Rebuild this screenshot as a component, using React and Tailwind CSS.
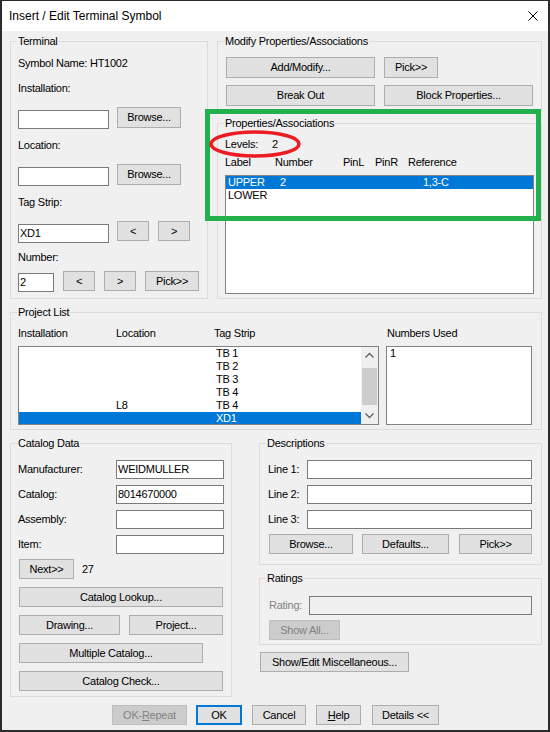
import React from 'react';

const FONT = "font-['Liberation_Sans',Arial,sans-serif]";

function Btn({ className = '', disabled = false, children }) {
  return (
    <div
      className={`flex shrink-0 items-center justify-center border leading-none ${
        disabled ? 'border-[#bfbfbf] bg-[#cccccc] text-[#838383]' : 'border-[#adadad] bg-[#e1e1e1] text-black'
      } ${className}`}
    >
      {children}
    </div>
  );
}

function Field({ className = '', children }) {
  return (
    <div className={`flex shrink-0 items-center border border-[#7a7a7a] px-[1px] leading-none ${className}`}>
      {children}
    </div>
  );
}

function Group({ label, className = '', children }) {
  return (
    <div className={`relative shrink-0 border border-[#dcdcdc] ${className}`}>
      <span className="absolute left-[6px] top-[-7px] h-[13px] bg-[#f0f0f0] px-[1px] leading-[13px]">{label}</span>
      {children}
    </div>
  );
}

function Text({ className = '', children }) {
  return <div className={`h-[13px] shrink-0 leading-[13px] ${className}`}>{children}</div>;
}

function Chevron({ up }) {
  return (
    <svg width="17" height="17" viewBox="0 0 17 17">
      <polyline
        points={up ? '4.5,10.5 8.5,6.5 12.5,10.5' : '4.5,6.5 8.5,10.5 12.5,6.5'}
        fill="none"
        stroke="#606060"
        strokeWidth="1.3"
      />
    </svg>
  );
}

const projectRows = [
  { loc: '', tag: 'TB 1' },
  { loc: '', tag: 'TB 2' },
  { loc: '', tag: 'TB 3' },
  { loc: '', tag: 'TB 4' },
  { loc: 'L8', tag: 'TB 4' },
  { loc: '', tag: 'XD1', selected: true },
];

export default function App() {
  return (
    <div
      className={`relative flex h-[732px] w-[550px] flex-col border-b-2 border-l-2 border-r-2 border-t border-[#2b2b2b] bg-[#f0f0f0] text-[11px] tracking-[-0.25px] text-black ${FONT}`}
    >
      {/* title bar */}
      <div className="flex h-[30px] shrink-0 items-center justify-between bg-white pl-[7px] pr-[10px] text-[12px] tracking-normal">
        <span>Insert / Edit Terminal Symbol</span>
        <svg width="10" height="10" viewBox="0 0 10 10">
          <path d="M0.5 0.5 L9.5 9.5 M9.5 0.5 L0.5 9.5" stroke="#000" strokeWidth="1" />
        </svg>
      </div>

      <div className="flex flex-1 flex-col pl-[8px]">
        {/* top row */}
        <div className="mt-[10px] flex gap-[9px]">
          <Group label="Terminal" className="flex h-[258px] w-[198px] flex-col pl-[7px]">
            <Text className="mt-[15px]">Symbol Name: HT1002</Text>
            <Text className="mt-[12px]">Installation:</Text>
            <div className="mt-[12px] flex items-start">
              <Field className="mt-[3px] h-[19px] w-[91px] bg-white" />
              <Btn className="ml-[8px] h-[21px] w-[64px]">Browse...</Btn>
            </div>
            <Text className="mt-[10px]">Location:</Text>
            <div className="mt-[12px] flex items-start">
              <Field className="mt-[3px] h-[19px] w-[91px] bg-white" />
              <Btn className="ml-[8px] h-[21px] w-[64px]">Browse...</Btn>
            </div>
            <Text className="mt-[10px]">Tag Strip:</Text>
            <div className="mt-[12px] flex items-start">
              <Field className="mt-[3px] h-[19px] w-[91px] bg-white">XD1</Field>
              <Btn className="ml-[8px] h-[20px] w-[32px]">&lt;</Btn>
              <Btn className="ml-[9px] h-[20px] w-[32px]">&gt;</Btn>
            </div>
            <Text className="mt-[8px]">Number:</Text>
            <div className="mt-[7px] flex items-start">
              <Field className="mt-[2px] h-[19px] w-[36px] bg-white">2</Field>
              <Btn className="ml-[9px] h-[20px] w-[32px]">&lt;</Btn>
              <Btn className="ml-[9px] h-[20px] w-[32px]">&gt;</Btn>
              <Btn className="ml-[9px] h-[20px] w-[54px]">Pick&gt;&gt;</Btn>
            </div>
          </Group>

          <div className="flex w-[325px] flex-col">
            <Group label="Modify Properties/Associations" className="flex h-[72px] w-[325px] flex-col pl-[8px]">
              <div className="mt-[15px] flex">
                <Btn className="h-[21px] w-[149px]">Add/Modify...</Btn>
                <Btn className="ml-[9px] h-[21px] w-[54px]">Pick&gt;&gt;</Btn>
              </div>
              <div className="mt-[7px] flex">
                <Btn className="h-[21px] w-[149px]">Break Out</Btn>
                <Btn className="ml-[9px] h-[21px] w-[149px]">Block Properties...</Btn>
              </div>
            </Group>

            <Group label="Properties/Associations" className="mt-[10px] flex h-[176px] w-[325px] flex-col pl-[7px]">
              <Text className="mt-[14px] flex">
                <span className="w-[47px]">Levels:</span>
                <span>2</span>
              </Text>
              <Text className="mt-[5px] flex">
                <span className="w-[50px]">Label</span>
                <span className="w-[68px]">Number</span>
                <span className="w-[32px]">PinL</span>
                <span className="w-[33px]">PinR</span>
                <span>Reference</span>
              </Text>
              <div className="mt-[6px] h-[119px] w-[309px] overflow-hidden border border-[#828282] bg-white">
                <div className="flex h-[13px] bg-[#0078d7] pl-[2px] leading-[13px] text-white">
                  <span className="w-[52px]">UPPER</span>
                  <span className="w-[143px]">2</span>
                  <span>1,3-C</span>
                </div>
                <div className="flex h-[13px] pl-[2px] leading-[13px]">
                  <span>LOWER</span>
                </div>
              </div>
            </Group>
          </div>
        </div>

        {/* project list */}
        <Group label="Project List" className="mt-[13px] flex h-[118px] w-[532px] flex-col pl-[7px]">
          <Text className="mt-[14px] flex">
            <div className="flex w-[361px]">
              <span className="w-[98px]">Installation</span>
              <span className="w-[98px]">Location</span>
              <span>Tag Strip</span>
            </div>
            <span className="ml-[8px]">Numbers Used</span>
          </Text>
          <div className="mt-[6px] flex">
            <div className="flex h-[79px] w-[361px] border border-[#828282] bg-white">
              <div className="flex-1 overflow-hidden">
                {projectRows.map((r, i) => (
                  <div
                    key={i}
                    className={`flex h-[13px] shrink-0 leading-[13px] ${r.selected ? 'bg-[#0078d7] text-white' : ''}`}
                  >
                    <span className="w-[97px]"></span>
                    <span className="w-[100px]">{r.loc}</span>
                    <span>{r.tag}</span>
                  </div>
                ))}
              </div>
              <div className="flex w-[17px] flex-col bg-[#f0f0f0]">
                <div className="h-[17px] shrink-0">
                  <Chevron up />
                </div>
                <div className="mx-[1px] mt-[4px] h-[37px] shrink-0 bg-[#cdcdcd]" />
                <div className="flex-1" />
                <div className="h-[17px] shrink-0">
                  <Chevron />
                </div>
              </div>
            </div>
            <div className="ml-[7px] h-[79px] w-[146px] border border-[#828282] bg-white pl-[3px] leading-[13px]">1</div>
          </div>
        </Group>

        {/* catalog + descriptions */}
        <div className="mt-[13px] flex">
          <Group label="Catalog Data" className="flex h-[254px] w-[222px] flex-col pl-[7px]">
            <div className="mt-[16px] flex h-[19px] items-center">
              <span className="w-[98px]">Manufacturer:</span>
              <Field className="h-[19px] w-[108px] bg-white">WEIDMULLER</Field>
            </div>
            <div className="mt-[6px] flex h-[19px] items-center">
              <span className="w-[98px]">Catalog:</span>
              <Field className="h-[19px] w-[108px] bg-white">8014670000</Field>
            </div>
            <div className="mt-[6px] flex h-[19px] items-center">
              <span className="w-[98px]">Assembly:</span>
              <Field className="h-[19px] w-[108px] bg-white" />
            </div>
            <div className="mt-[6px] flex h-[19px] items-center">
              <span className="w-[98px]">Item:</span>
              <Field className="h-[19px] w-[108px] bg-white" />
            </div>
            <div className="mt-[5px] flex items-center">
              <Btn className="ml-[1px] h-[20px] w-[55px]">Next&gt;&gt;</Btn>
              <span className="ml-[8px]">27</span>
            </div>
            <Btn className="ml-[1px] mt-[8px] h-[20px] w-[204px]">Catalog Lookup...</Btn>
            <div className="ml-[1px] mt-[8px] flex">
              <Btn className="h-[20px] w-[101px]">Drawing...</Btn>
              <Btn className="ml-[9px] h-[20px] w-[94px]">Project...</Btn>
            </div>
            <Btn className="ml-[1px] mt-[8px] h-[20px] w-[184px]">Multiple Catalog...</Btn>
            <Btn className="ml-[1px] mt-[8px] h-[20px] w-[204px]">Catalog Check...</Btn>
          </Group>

          <div className="ml-[27px] flex w-[283px] flex-col">
            <Group label="Descriptions" className="flex h-[122px] w-[283px] flex-col pl-[8px]">
              <div className="mt-[16px] flex h-[19px] items-center">
                <span className="w-[39px]">Line 1:</span>
                <Field className="h-[19px] w-[225px] bg-white" />
              </div>
              <div className="mt-[6px] flex h-[19px] items-center">
                <span className="w-[39px]">Line 2:</span>
                <Field className="h-[19px] w-[225px] bg-white" />
              </div>
              <div className="mt-[6px] flex h-[19px] items-center">
                <span className="w-[39px]">Line 3:</span>
                <Field className="h-[19px] w-[225px] bg-white" />
              </div>
              <div className="mt-[5px] flex">
                <Btn className="ml-[1px] h-[20px] w-[84px]">Browse...</Btn>
                <Btn className="ml-[9px] h-[20px] w-[87px]">Defaults...</Btn>
                <Btn className="ml-[10px] h-[20px] w-[73px]">Pick&gt;&gt;</Btn>
              </div>
            </Group>

            <Group label="Ratings" className="mt-[13px] flex h-[67px] w-[283px] flex-col pl-[8px]">
              <div className="mt-[17px] flex h-[19px] items-center">
                <span className="w-[41px] pl-[1px] text-[#838383]">Rating:</span>
                <Field className="h-[19px] w-[223px] bg-transparent" />
              </div>
              <Btn disabled className="ml-[1px] mt-[5px] h-[20px] w-[71px]">Show All...</Btn>
            </Group>

            <Btn className="ml-[1px] mt-[7px] h-[20px] w-[149px]">Show/Edit Miscellaneous...</Btn>
          </div>
        </div>

        {/* dialog buttons */}
        <div className="mt-[8px] flex">
          <Btn disabled className="ml-[102px] h-[20px] w-[75px]">
            OK-<span className="underline">R</span>epeat
          </Btn>
          <Btn className="ml-[9px] h-[20px] w-[46px] border-2 !border-[#0078d7]">OK</Btn>
          <Btn className="ml-[10px] h-[20px] w-[54px]">Cancel</Btn>
          <Btn className="ml-[10px] h-[20px] w-[45px]">
            <span className="underline">H</span>elp
          </Btn>
          <Btn className="ml-[11px] h-[20px] w-[67px]">Details &lt;&lt;</Btn>
        </div>
      </div>

      {/* annotation overlays */}
      <div className="pointer-events-none absolute left-[203px] top-[108px] h-[112px] w-[336px] border-[5px] border-[#22b14c]" />
      <svg
        className="pointer-events-none absolute left-[205px] top-[128px]"
        width="96"
        height="30"
        viewBox="0 0 96 30"
      >
        <ellipse cx="48" cy="15" rx="44" ry="12" fill="none" stroke="#ed1c24" strokeWidth="3.5" />
      </svg>
    </div>
  );
}
